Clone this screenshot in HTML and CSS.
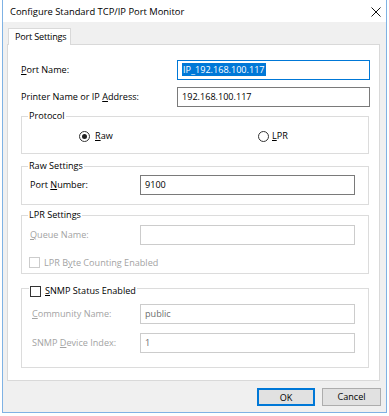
FILE: index.html
```html
<!DOCTYPE html>
<html>
<head>
<meta charset="utf-8">
<link rel="stylesheet" href="styles.css">
</head>
<body>
<div class="window">
  <div class="titlebar">
    <span class="title">Configure Standard TCP/IP Port Monitor</span>
    <svg class="close" width="10" height="10" viewBox="0 0 10 10"><path d="M0.5 0.5L9.5 9.5M9.5 0.5L0.5 9.5" stroke="#111" stroke-width="1" fill="none"/></svg>
  </div>
  <div class="body">
    <div class="tabs"><div class="tab">Port Settings</div></div>
    <div class="panel">
      <div class="toprows">
        <span class="lbl"><u>P</u>ort Name:</span>
        <div class="input focus"><span class="sel">IP_192.168.100.117</span></div>
        <span class="lbl">Printer Name or IP <u>A</u>ddress:</span>
        <div class="input">192.168.100.117</div>
      </div>

      <fieldset class="group protocol">
        <legend>Protocol</legend>
        <div class="radios">
          <span class="opt"><span class="radio on"></span><span><u>R</u>aw</span></span>
          <span class="opt"><span class="radio"></span><span><u>L</u>PR</span></span>
        </div>
      </fieldset>

      <fieldset class="group raw">
        <legend>Raw Settings</legend>
        <div class="fields">
          <span class="lbl">Port <u>N</u>umber:</span>
          <div class="input">9100</div>
        </div>
      </fieldset>

      <fieldset class="group lpr">
        <legend>LPR Settings</legend>
        <div class="fields">
          <span class="lbl dis"><u>Q</u>ueue Name:</span>
          <div class="input disabled"></div>
        </div>
        <div class="check-row dis"><span class="check disabled"></span><span>LPR B<u>y</u>te Counting Enabled</span></div>
      </fieldset>

      <fieldset class="group snmp">
        <legend><span class="check"></span><span><u>S</u>NMP Status Enabled</span></legend>
        <div class="fields snmp-fields">
          <span class="lbl dis ind"><u>C</u>ommunity Name:</span>
          <div class="input disabled">public</div>
          <span class="lbl dis ind">SNMP <u>D</u>evice Index:</span>
          <div class="input disabled">1</div>
        </div>
      </fieldset>
    </div>
    <div class="buttons">
      <button class="btn default">OK</button>
      <button class="btn">Cancel</button>
    </div>
  </div>
</div>
</body>
</html>
```

FILE: styles.css
```css
html, body {
  margin: 0;
  padding: 0;
  background: #ffffff;
}
body {
  width: 389px;
  height: 416px;
  font-family: "Open Sans", "Noto Sans", sans-serif;
  font-size: 9.1px;
  color: #000;
}
u { text-decoration: underline; text-underline-offset: 1px; }

.window {
  margin-left: 2px;
  width: 385px;
  height: 413px;
  box-sizing: border-box;
  border: 1px solid #7fb2e4;
  border-top: none;
  display: flex;
  flex-direction: column;
}
.titlebar {
  height: 22px;
  background: #fff;
  display: flex;
  align-items: center;
  justify-content: space-between;
  padding: 0 5px 0 7px;
  flex: none;
}
.title { font-size: 9.4px; }
.close { display: block; margin-top: 1px; }

.body {
  flex: 1;
  background: #f0f0f0;
  padding: 6px 5px 0 4px;
  display: flex;
  flex-direction: column;
}
.tabs { display: flex; height: 17px; }
.tab {
  position: relative;
  z-index: 1;
  background: #fff;
  border: 1px solid #d9d9d9;
  border-bottom: none;
  height: 17px;
  box-sizing: border-box;
  padding: 0 4px 0 6px;
  line-height: 15px;
  margin-left: 1px;
  letter-spacing: -0.2px;
}
.panel {
  width: 373px;
  height: 337px;
  box-sizing: border-box;
  background: #fff;
  border: 1px solid #d9d9d9;
  margin-top: -1px;
  padding: 15px 0 0 13px;
}
.toprows {
  display: grid;
  grid-template-columns: 156px 193px;
  grid-auto-rows: 20px;
  row-gap: 7px;
  align-items: center;
}
.lbl { line-height: 14px; }
.lbl.dis, .dis { color: #a3a3a3; }
.lbl.ind { padding-left: 2px; }

.input {
  height: 20px;
  box-sizing: border-box;
  border: 1px solid #7a7a7a;
  background: #fff;
  padding: 0 4px;
  line-height: 18px;
  white-space: nowrap;
}
.input.focus { border-color: #0078d7; padding-left: 4px; }
.input.disabled { border-color: #cccccc; color: #6d6d6d; }
.sel {
  background: #0078d7;
  color: #fff;
  display: inline-block;
  line-height: 13px;
  padding: 0 1px;
}

.group {
  margin: 0;
  padding: 0;
  width: 348px;
  box-sizing: border-box;
  border: 1px solid #dcdcdc;
  min-width: 0;
}
.group legend {
  padding: 0 1px;
  margin-left: 6px;
  line-height: 14px;
  height: 14px;
}
.protocol { margin-top: 2px; }
.radios {
  display: grid;
  grid-template-columns: 179px auto;
  padding: 6px 0 10px 57px;
  height: 14px;
}
.opt { display: flex; align-items: center; gap: 5px; line-height: 14px; }
.opt:last-child { gap: 3px; }
.radio {
  width: 11px;
  height: 11px;
  box-sizing: border-box;
  border: 1px solid #333;
  border-radius: 50%;
  display: flex;
  align-items: center;
  justify-content: center;
  background: #fff;
}
.radio.on::after {
  content: "";
  width: 5px;
  height: 5px;
  border-radius: 50%;
  background: #222;
}

.fields {
  display: grid;
  grid-template-columns: 110px 215px;
  grid-auto-rows: 20px;
  align-items: center;
  padding-left: 8px;
}
.raw { margin-top: 5px; }
.raw .fields { padding-top: 2px; padding-bottom: 9px; }

.lpr { margin-top: 3px; }
.lpr .fields { padding-top: 3px; }
.check-row {
  display: flex;
  align-items: center;
  gap: 4px;
  height: 14px;
  margin: 10px 0 4px 7px;
}
.check {
  width: 11px;
  height: 11px;
  box-sizing: border-box;
  border: 1px solid #333;
  background: #fff;
  flex: none;
}
.check.disabled { border-color: #cccccc; }

.snmp { margin-top: 4px; }
.snmp legend {
  height: 20px;
  line-height: 14px;
  padding: 6px 1px 0 1px;
  box-sizing: border-box;
  display: flex;
  align-items: center;
  gap: 4px;
  margin-left: 7px;
}
.snmp-fields {
  row-gap: 9px;
  padding-top: 6px;
  padding-bottom: 14px;
}

.buttons {
  display: flex;
  justify-content: flex-end;
  gap: 7px;
  margin-top: 7px;
}
.btn {
  width: 59px;
  height: 18px;
  box-sizing: border-box;
  font-family: inherit;
  font-size: 9.1px;
  background: #e1e1e1;
  border: 1px solid #adadad;
  padding: 0;
  color: #000;
  line-height: 16px;
}
.btn.default {
  border: 2px solid #0078d7;
  width: 58px;
}
```
